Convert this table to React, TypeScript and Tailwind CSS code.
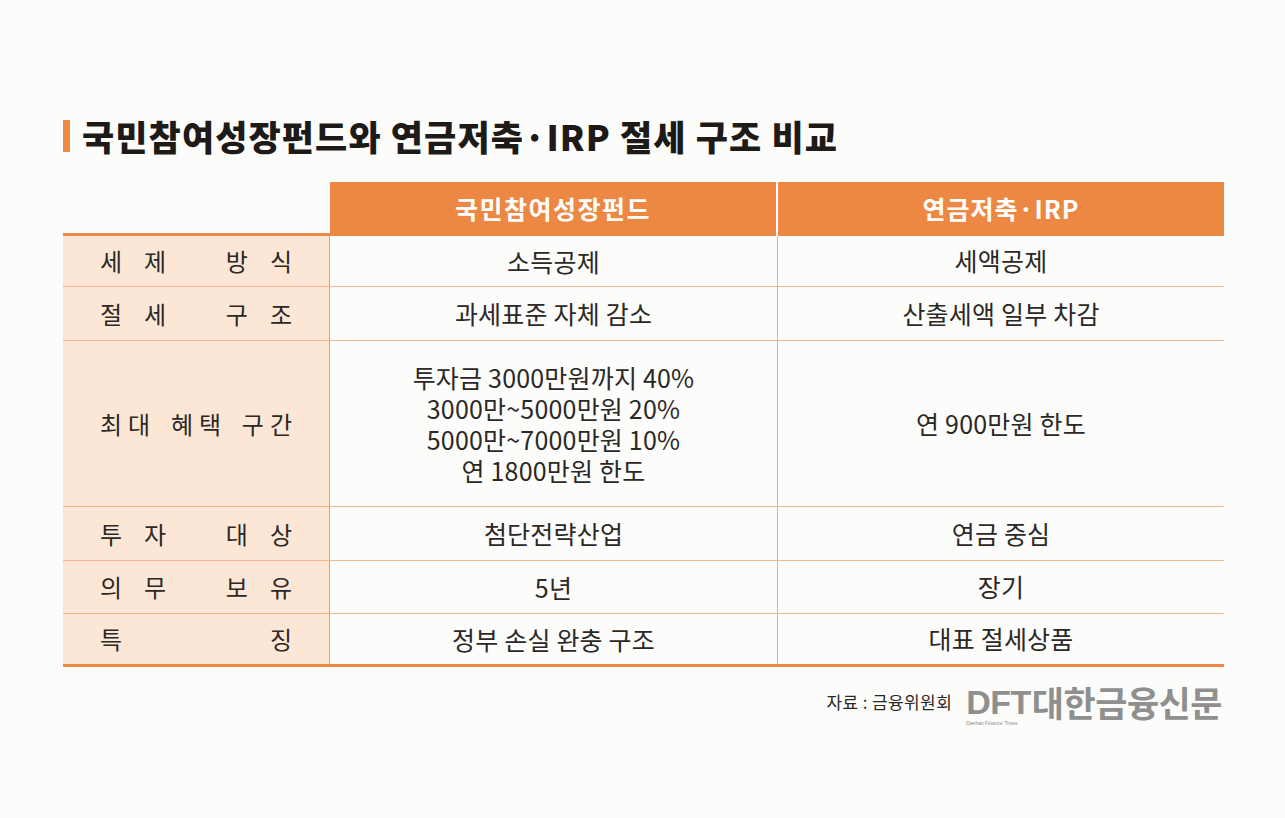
const rows: { label: string[]; gap: string; a: string[]; b: string; h: string }[] = [
  { label: ["세제", "방식"], gap: "gap-[22px]", a: ["소득공제"], b: "세액공제", h: "h-[51px]" },
  { label: ["절세", "구조"], gap: "gap-[22px]", a: ["과세표준 자체 감소"], b: "산출세액 일부 차감", h: "h-[54px]" },
  {
    label: ["최대", "혜택", "구간"],
    gap: "gap-[6px]",
    a: ["투자금 3000만원까지 40%", "3000만~5000만원 20%", "5000만~7000만원 10%", "연 1800만원 한도"],
    b: "연 900만원 한도",
    h: "h-[166px]",
  },
  { label: ["투자", "대상"], gap: "gap-[22px]", a: ["첨단전략산업"], b: "연금 중심", h: "h-[54px]" },
  { label: ["의무", "보유"], gap: "gap-[22px]", a: ["5년"], b: "장기", h: "h-[53px]" },
  { label: ["특", "징"], gap: "gap-[22px]", a: ["정부 손실 완충 구조"], b: "대표 절세상품", h: "h-[53px]" },
];

const kr = "font-['Noto_Sans_CJK_KR',sans-serif]";

export default function App() {
  return (
    <div className={`w-[1285px] h-[818px] bg-[#fcfcfb] pt-[119px] pl-[63px] ${kr}`}>
      <div className="flex items-center gap-[12px] h-[33px]">
        <div className="w-[7px] h-[32px] bg-[#ee8a3f]" />
        <h1 className="text-[35px] leading-none font-black tracking-[1.1px] text-[#1e1a18]">
          국민참여성장펀드와 연금저축·IRP 절세 구조 비교
        </h1>
      </div>

      <div className="mt-[30px] w-[1161px]">
        <div className="flex h-[54px]">
          <div className="w-[267px] border-b-[3px] border-[#ee8a48]" />
          <div className="w-[448px] bg-[#ec8843] flex items-center justify-center text-white text-[25px] font-bold tracking-[1.5px] border-r-2 border-white">
            국민참여성장펀드
          </div>
          <div className="flex-1 bg-[#ec8843] flex items-center justify-center text-white text-[25px] font-bold tracking-[1px]">
            연금저축·IRP
          </div>
        </div>

        {rows.map((r, i) => (
          <div
            key={i}
            className={`flex ${r.h} ${i < rows.length - 1 ? "border-b border-[#f3b78f]" : "border-b-[3px] border-[#ec8843]"}`}
          >
            <div className="w-[267px] bg-[#fce7d7] border-r border-[#ef9d66] flex items-center justify-between px-[37px] text-[24px] text-[#2b2826] font-normal">
              {r.label.map((w, j) => (
                <span key={j} className={`flex ${r.gap}`}>
                  {w.split("").map((c, k) => (
                    <span key={k}>{c}</span>
                  ))}
                </span>
              ))}
            </div>
            <div className="w-[448px] border-r border-[#f1a877] flex items-center justify-center">
              <p className="text-center text-[25px] leading-[31px] tracking-[0.2px] text-[#2b2826]">
                {r.a.map((t, j) => (
                  <span key={j}>
                    {j > 0 && <br />}
                    {t}
                  </span>
                ))}
              </p>
            </div>
            <div className="flex-1 flex items-center justify-center text-[25px] tracking-[0.2px] text-[#2b2826]">
              {r.b}
            </div>
          </div>
        ))}

        <div className="flex justify-end items-center mt-[17px] pr-[2px]">
          <span className="text-[17px] tracking-[0.4px] text-[#2b2826] mr-[14px]">자료 : 금융위원회</span>
          <div className="flex items-end text-[#8f8f8f]">
            <div className="relative flex flex-col">
              <span className="font-['Liberation_Sans',sans-serif] font-bold text-[34px] leading-[36px] tracking-[-0.5px]">
                DFT
              </span>
              <span className="absolute -bottom-[6px] left-0 font-['Liberation_Sans',sans-serif] text-[5px] leading-none whitespace-nowrap">
                Daehan Finance Times
              </span>
            </div>
            <span className="text-[35px] leading-[36px] font-bold tracking-[-0.5px] ml-[1px]">대한금융신문</span>
          </div>
        </div>
      </div>
    </div>
  );
}
